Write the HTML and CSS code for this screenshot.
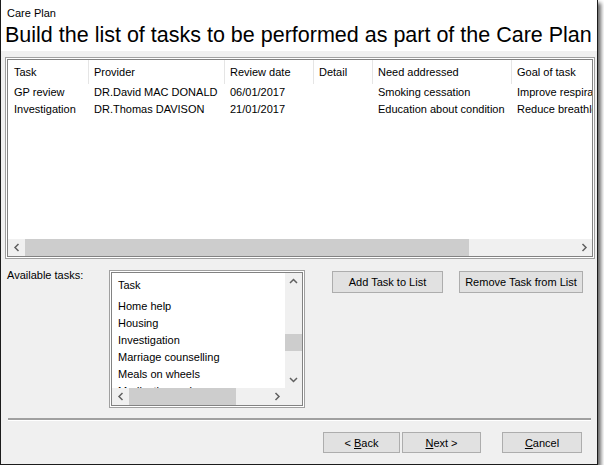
FILE: index.html
```html
<!DOCTYPE html>
<html lang="en">
<head>
    <meta charset="UTF-8">
    <title>Care Plan</title>
    <link rel="stylesheet" href="styles.css">
</head>
<body>
<div class="dialog">
    <div class="dialogHeader">
        <div class="caption">Care Plan</div>
        <div class="pageTitle">Build the list of tasks to be performed as part of the Care Plan</div>
    </div>

    <div class="dialogBody">
        <!-- tasks already in the plan -->
        <div class="frame planList">
            <div class="frameInner planInner">
                <div class="planArea">
                    <div class="planRow planHead">
                        <div class="col colTask">Task</div>
                        <div class="col colProvider">Provider</div>
                        <div class="col colDate">Review date</div>
                        <div class="col colDetail">Detail</div>
                        <div class="col colNeed">Need addressed</div>
                        <div class="col colGoal">Goal of task</div>
                    </div>
                    <div class="planRow">
                        <div class="col colTask">GP review</div>
                        <div class="col colProvider">DR.David MAC DONALD</div>
                        <div class="col colDate">06/01/2017</div>
                        <div class="col colDetail"></div>
                        <div class="col colNeed">Smoking cessation</div>
                        <div class="col colGoal">Improve respiratory function</div>
                    </div>
                    <div class="planRow">
                        <div class="col colTask">Investigation</div>
                        <div class="col colProvider">DR.Thomas DAVISON</div>
                        <div class="col colDate">21/01/2017</div>
                        <div class="col colDetail"></div>
                        <div class="col colNeed">Education about condition</div>
                        <div class="col colGoal">Reduce breathlessness</div>
                    </div>
                </div>
                <div class="hScroll">
                    <div class="arrowBox">
                        <svg width="8" height="9" viewBox="0 0 8 9"><path d="M5.5 1 L2 4.5 L5.5 8" fill="none" stroke="#606060" stroke-width="1.5"/></svg>
                    </div>
                    <div class="track"><div class="thumb thumbWide"></div></div>
                    <div class="arrowBox">
                        <svg width="8" height="9" viewBox="0 0 8 9"><path d="M2.5 1 L6 4.5 L2.5 8" fill="none" stroke="#606060" stroke-width="1.5"/></svg>
                    </div>
                </div>
            </div>
        </div>

        <div class="pickRow">
            <div class="pickLabel">Available tasks:</div>
            <div class="frame pickList">
                <div class="frameInner pickInner">
                    <div class="pickArea">
                        <div class="pickHead">Task</div>
                        <div class="pickItem">Home help</div>
                        <div class="pickItem">Housing</div>
                        <div class="pickItem">Investigation</div>
                        <div class="pickItem">Marriage counselling</div>
                        <div class="pickItem">Meals on wheels</div>
                        <div class="pickItem">Medication review</div>
                    </div>
                    <div class="vScroll">
                        <div class="arrowBox">
                            <svg width="9" height="7" viewBox="0 0 9 7"><path d="M1 5 L4.5 1.5 L8 5" fill="none" stroke="#606060" stroke-width="1.5"/></svg>
                        </div>
                        <div class="vTrack"><div class="vThumb"></div></div>
                        <div class="arrowBox">
                            <svg width="9" height="7" viewBox="0 0 9 7"><path d="M1 2 L4.5 5.5 L8 2" fill="none" stroke="#606060" stroke-width="1.5"/></svg>
                        </div>
                    </div>
                    <div class="hScroll">
                        <div class="arrowBox">
                            <svg width="8" height="9" viewBox="0 0 8 9"><path d="M5.5 1 L2 4.5 L5.5 8" fill="none" stroke="#606060" stroke-width="1.5"/></svg>
                        </div>
                        <div class="track"><div class="thumb thumbSmall"></div></div>
                        <div class="arrowBox">
                            <svg width="8" height="9" viewBox="0 0 8 9"><path d="M2.5 1 L6 4.5 L2.5 8" fill="none" stroke="#606060" stroke-width="1.5"/></svg>
                        </div>
                    </div>
                    <div class="corner"></div>
                </div>
            </div>
            <button class="winButton addButton" type="button">Add Task to List</button>
            <button class="winButton removeButton" type="button">Remove Task from List</button>
        </div>

        <div class="separator"></div>

        <div class="footer">
            <button class="winButton backButton" type="button">&lt; <u>B</u>ack</button>
            <button class="winButton nextButton" type="button"><u>N</u>ext &gt;</button>
            <button class="winButton cancelButton" type="button"><u>C</u>ancel</button>
        </div>
    </div>
</div>
</body>
</html>
```
FILE: styles.css
```css
* {
    box-sizing: border-box;
}
body {
    margin: 0;
    padding: 0;
    background-color: #fff;
    font-family: "Liberation Sans", Arial, sans-serif;
    font-size: 11px;
    color: #000;
}
.dialog {
    width: 598px;
    height: 465px;
    border: 1px solid #1c1c1c;
    border-top: none;
    background-color: #f0f0f0;
    box-shadow: 3px 3px 4px rgba(0, 0, 0, 0.6);
    display: flex;
    flex-direction: column;
}
.dialogHeader {
    height: 51px;
    background-color: #fff;
    padding: 7px 0 0 6px;
}
.caption {
    line-height: 13px;
}
.pageTitle {
    margin: 3px 0 0 -2px;
    font-size: 21.5px;
    line-height: 24px;
    white-space: nowrap;
}
.dialogBody {
    flex: 1;
    display: flex;
    flex-direction: column;
}

/* sunken double border round the lists */
.frame {
    border: 1px solid #a0a0a0;
    padding: 1px;
    background-color: #fff;
}
.frameInner {
    border: 1px solid #828282;
    background-color: #fff;
    height: 100%;
    overflow: hidden;
}

.planList {
    width: 590px;
    height: 202px;
    margin: 6px 0 0 4px;
}
.planInner {
    display: flex;
    flex-direction: column;
}
.planArea {
    flex: 1;
    overflow: hidden;
}
.planRow {
    display: flex;
    height: 17px;
    line-height: 17px;
    white-space: nowrap;
}
.planHead {
    height: 24px;
    line-height: 24px;
}
.col {
    flex: none;
    padding-left: 5px;
    overflow: hidden;
}
.planHead .col + .col {
    border-left: 1px solid #e5e5e5;
}
.planRow:not(.planHead) .col + .col {
    padding-left: 6px;
}
.colTask {
    width: 80px;
    padding-left: 6px;
}
.colProvider {
    width: 136px;
}
.colDate {
    width: 89px;
}
.colDetail {
    width: 59px;
}
.colNeed {
    width: 139px;
}
.colGoal {
    width: 140px;
}

/* scrollbars */
.hScroll {
    flex: none;
    height: 17px;
    display: flex;
    background-color: #f0f0f0;
}
.arrowBox {
    width: 17px;
    height: 17px;
    flex: none;
    display: flex;
    align-items: center;
    justify-content: center;
}
.arrowBox svg {
    display: block;
}
.track {
    flex: 1;
    display: flex;
}
.thumb {
    height: 100%;
    background-color: #cdcdcd;
}
.thumbWide {
    width: 444px;
}
.thumbSmall {
    width: 107px;
}
.vScroll {
    display: flex;
    flex-direction: column;
    background-color: #f0f0f0;
}
.vTrack {
    flex: 1;
}
.vThumb {
    height: 17px;
    margin-top: 44px;
    background-color: #cdcdcd;
}
.corner {
    background-color: #f0f0f0;
}

.pickRow {
    display: flex;
    align-items: flex-start;
    height: 159px;
}
.pickLabel {
    width: 102px;
    margin: 10px 0 0 6px;
    line-height: 13px;
}
.pickList {
    width: 196px;
    height: 138px;
    margin-top: 11px;
}
.pickInner {
    display: grid;
    grid-template-columns: 173px 17px;
    grid-template-rows: 115px 17px;
}
.pickArea {
    overflow: hidden;
    padding-left: 6px;
}
.pickHead {
    height: 25px;
    line-height: 24px;
}
.pickItem {
    height: 17px;
    line-height: 17px;
    white-space: nowrap;
}

.winButton {
    margin: 0;
    padding: 0;
    height: 22px;
    border: 1px solid #adadad;
    background-color: #e1e1e1;
    font-family: "Liberation Sans", Arial, sans-serif;
    font-size: 11px;
    color: #000;
}
.addButton {
    width: 111px;
    margin: 12px 0 0 27px;
}
.removeButton {
    width: 124px;
    margin: 12px 0 0 16px;
}

.separator {
    width: 583px;
    height: 3px;
    margin: 0 0 0 7px;
    border-top: 2px solid #a0a0a0;
    border-bottom: 1px solid #fff;
}

.footer {
    display: flex;
    justify-content: flex-end;
    padding: 11px 15px 0 0;
}
.footer .winButton {
    height: 21px;
}
.backButton {
    width: 77px;
}
.nextButton {
    width: 79px;
    margin-left: 2px;
}
.cancelButton {
    width: 80px;
    margin-left: 21px;
}
```
